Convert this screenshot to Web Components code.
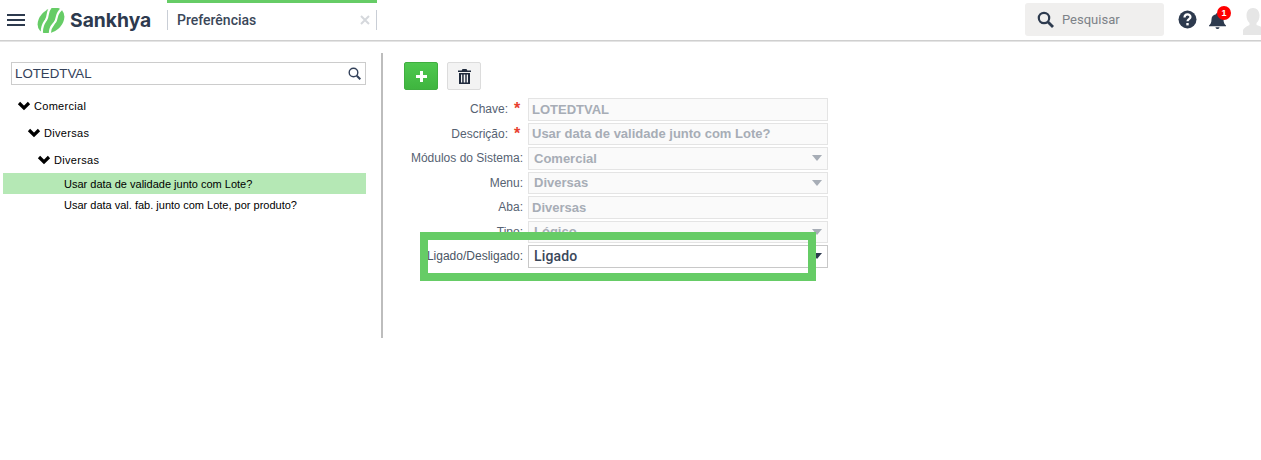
<!DOCTYPE html>
<html lang="pt-BR">
<head>
<meta charset="utf-8">
<title>Preferências</title>
<style>
  html, body { margin: 0; padding: 0; background: #fff; }
  body { font-family: "Liberation Sans", Arial, sans-serif; color: #2d3a4e; overflow: hidden; }
</style>
</head>
<body>
<sk-header></sk-header>
<sk-main>
  <sk-tree-panel slot="tree">
    <sk-tree-node level="0">Comercial</sk-tree-node>
    <sk-tree-node level="1">Diversas</sk-tree-node>
    <sk-tree-node level="2">Diversas</sk-tree-node>
    <sk-tree-leaf selected>Usar data de validade junto com Lote?</sk-tree-leaf>
    <sk-tree-leaf>Usar data val. fab. junto com Lote, por produto?</sk-tree-leaf>
  </sk-tree-panel>
  <sk-form-panel slot="form">
    <sk-field label="Chave:" required>LOTEDTVAL</sk-field>
    <sk-field label="Descrição:" required>Usar data de validade junto com Lote?</sk-field>
    <sk-field label="Módulos do Sistema:" select>Comercial</sk-field>
    <sk-field label="Menu:" select>Diversas</sk-field>
    <sk-field label="Aba:">Diversas</sk-field>
    <sk-field label="Tipo:" select>Lógico</sk-field>
    <sk-field label="Ligado/Desligado:" select active>Ligado</sk-field>
  </sk-form-panel>
</sk-main>

<script>
(function() {
    'use strict';

    // Small helper, every element below does the same thing in its constructor
    function shadow(el, html) {
        var root = el.attachShadow({ mode: 'open' });
        root.innerHTML = html;
        return root;
    }

    class SkHeader extends HTMLElement {
        constructor() {
            super();
            shadow(this, `
<style>
  :host { display: flex; align-items: stretch; height: 40px; border-bottom: 1px solid #cfcfcf; box-shadow: 0 1px 0 #e4e4e4; background: #fff; font-family: Roboto, sans-serif; box-sizing: content-box; }
  .menu { width: 18px; margin: 14px 0 0 7px; height: 12px; display: flex; flex-direction: column; justify-content: space-between; }
  .menu i { display: block; height: 2px; background: #2d3a4e; }
  .logo { display: flex; align-items: center; margin-left: 12px; width: 130px; flex: none; }
  .logo svg { display: block; flex: none; }
  .logo b { font: 700 19.300px Inter, sans-serif; color: #2d3a4e; margin-left: 5px; margin-top: -1px; }
  .tab { position: relative; width: 210px; flex: none; box-sizing: border-box; border-top: 3px solid #66cc66; padding-left: 10px; display: flex; align-items: center; justify-content: space-between; font-size: 14px; font-weight: 500; color: #3a4759; }
  .tab span { margin-top: -3px; }
  .tab::before, .tab::after { content: ""; position: absolute; top: 7px; height: 20px; width: 1px; background: #c9ced6; }
  .tab::before { left: 0; }
  .tab::after { right: 0; }
  .close { margin-right: 7px; margin-top: -3px; }
  .spacer { flex: 1; }
  .search { width: 139px; height: 33px; margin-top: 3px; background: #f0efee; border-radius: 3px; display: flex; align-items: center; box-sizing: border-box; padding-left: 12px; font-size: 13px; color: #7d8288; }
  .search span { margin-left: 8px; }
  .help { margin: 10px 0 0 14px; }
  .bell { position: relative; margin: 13px 0 0 12px; width: 18px; }
  .badge { position: absolute; top: -7px; left: 8px; width: 14px; height: 14px; border-radius: 50%; background: #f00; color: #fff; font: 700 9px/14px "Liberation Sans", sans-serif; text-align: center; }
  .user { margin: 7px 0 0 16px; width: 18px; overflow: hidden; }
</style>
<div class="menu"><i></i><i></i><i></i></div>
<div class="logo">
  <svg width="28" height="25" viewBox="0 0 28 25">
    <ellipse cx="14" cy="12.500" rx="15" ry="11" transform="rotate(-42 14 12.500)" fill="#66cc66"/>
    <g fill="none" stroke="#fff" stroke-width="2.200">
      <path d="M15 -2C9 3 12 8 9 12 7 15 4 18 5 27"/>
      <path d="M26 0C18 5 21 10 18 14 16 17 12 19 13 27"/>
    </g>
  </svg>
  <b>Sankhya</b>
</div>
<div class="tab">
  <span>Preferências</span>
  <svg class="close" width="10" height="10" viewBox="0 0 10 10"><path d="M1 1l8 8M9 1l-8 8" stroke="#d5d8dc" stroke-width="2"/></svg>
</div>
<div class="spacer"></div>
<div class="search">
  <svg width="17" height="17" viewBox="0 0 17 17" fill="none" stroke="#2d3a4e"><circle cx="7" cy="7" r="5.200" stroke-width="2.200"/><path d="M11 11l5 5" stroke-width="2.800"/></svg>
  <span>Pesquisar</span>
</div>
<svg class="help" width="19" height="19" viewBox="0 0 19 19"><circle cx="9.500" cy="9.500" r="9" fill="#2d3a4e"/><path d="M6.500 7.500c0-4 6-4 6-.500 0 2.200-3 2.200-3 4.300" fill="none" stroke="#fff" stroke-width="2.200"/><rect x="8.300" y="13" width="2.400" height="2.400" fill="#fff"/></svg>
<div class="bell">
  <svg width="17" height="16" viewBox="0 0 17 18" preserveAspectRatio="none"><path fill="#2d3a4e" d="M8.500 0c1 0 1.500.7 1.500 1.500 3 .6 4.500 3 4.500 5.500 0 4 1 5.500 2.500 7v1H0v-1c1.500-1.500 2.500-3 2.500-7 0-2.500 1.500-4.900 4.500-5.500C7 .7 7.500 0 8.500 0z"/><path fill="#2d3a4e" d="M6.500 16h4c0 1-1 2-2 2s-2-1-2-2z"/></svg>
  <div class="badge">1</div>
</div>
<div class="user">
  <svg width="22" height="28" viewBox="0 0 22 28"><path fill="#e6e6e6" d="M10 1c4 0 6.500 3 6.500 7.500 0 3-1 6-3 7.500v2c3 1.200 8 2.500 8.500 5.500v4.500H0V23.500c.5-2.500 4-4.300 6.500-5.500v-2c-2-1.500-3-4.500-3-7.500C3.500 4 6 1 10 1z"/></svg>
</div>
`);
        }
    }

    class SkMain extends HTMLElement {
        constructor() {
            super();
            shadow(this, `
<style>
  :host { display: flex; align-items: flex-start; padding-top: 12px; }
  .left { width: 381px; box-sizing: border-box; }
  .divider { width: 2px; height: 285px; background: #bdbdbd; }
  .right { flex: 1; }
</style>
<div class="left"><slot name="tree"></slot></div>
<div class="divider"></div>
<div class="right"><slot name="form"></slot></div>
`);
        }
    }

    class SkTreePanel extends HTMLElement {
        constructor() {
            super();
            shadow(this, `
<style>
  :host { display: block; padding: 9px 15px 0 3px; }
  .search { height: 23px; margin-left: 8px; border: 1px solid #ccc; box-sizing: border-box; display: flex; align-items: center; justify-content: space-between; padding: 0 4px 0 3px; font-size: 13.300px; color: #33415a; }
  .tree { padding-top: 7px; }
</style>
<div class="search">
  <span>LOTEDTVAL</span>
  <svg width="13" height="13" viewBox="0 0 13 13" fill="none" stroke="#33415a"><circle cx="5.500" cy="5.500" r="4.300" stroke-width="1.400"/><path d="M8.800 8.800l3.500 3.500" stroke-width="2"/></svg>
</div>
<div class="tree"><slot></slot></div>
`);
        }
    }

    class SkTreeNode extends HTMLElement {
        constructor() {
            super();
            var level = parseInt(this.getAttribute('level') || '0');
            shadow(this, `
<style>
  :host { display: flex; align-items: center; height: 27px; padding-left: ${14 + level * 10}px; font-size: 11px; letter-spacing: 0.3px; color: #000; }
  svg { margin-right: 3px; display: block; }
</style>
<svg width="14" height="10" viewBox="0 0 14 10"><path d="M2 2l5 5 5-5" fill="none" stroke="#000" stroke-width="3.200"/></svg>
<slot></slot>
`);
        }
    }

    class SkTreeLeaf extends HTMLElement {
        constructor() {
            super();
            shadow(this, `
<style>
  :host { display: flex; align-items: center; height: 21px; padding-left: 61px; font-size: 11px; color: #000; }
  :host([selected]) { background: #b5e8b5; }
</style>
<slot></slot>
`);
        }
    }

    class SkFormPanel extends HTMLElement {
        constructor() {
            super();
            shadow(this, `
<style>
  :host { display: block; position: relative; padding: 9px 0 0 21px; }
  .tools { display: flex; gap: 9px; height: 28px; margin-bottom: 8.100px; }
  button { width: 34px; height: 28px; padding: 0; border-radius: 2px; display: flex; align-items: center; justify-content: center; box-sizing: border-box; }
  .add { background: linear-gradient(#4fc84f, #3fb53f); border: 1px solid #3fae3f; }
  .del { background: #f3f3f3; border: 1px solid #dcdcdc; }
  .fields { display: flex; flex-direction: column; gap: 2px; }
  /* green marker drawn over the form in the screenshot */
  .mark { position: absolute; left: 37px; top: 179px; width: 396px; height: 49px; box-sizing: border-box; border: 8px solid #66cc66; pointer-events: none; }
</style>
<div class="tools">
  <button class="add" type="button"><svg width="13" height="13" viewBox="0 0 13 13"><path d="M5 1h3v4h4v3H8v4H5V8H1V5h4z" fill="#fff"/></svg></button>
  <button class="del" type="button"><svg width="13" height="15" viewBox="0 0 13 15"><path fill="#1f2a3c" d="M4.500 0h4l.8 1.500H13V3H0V1.500h3.700zM1 4h11v11H1zm2 1.500v8h1.200v-8zm2.700 0v8h1.600v-8zm3 0v8H10v-8z" fill-rule="evenodd"/></svg></button>
</div>
<div class="fields"><slot></slot></div>
<div class="mark"></div>
`);
        }
    }

    class SkField extends HTMLElement {
        constructor() {
            super();
            var required = this.hasAttribute('required');
            var select = this.hasAttribute('select');
            shadow(this, `
<style>
  :host { display: flex; height: 22.5px; font-size: 12px; }
  .label { width: 124px; flex: none; display: flex; justify-content: flex-end; align-items: center; color: #566272; white-space: nowrap; padding-right: 5px; box-sizing: border-box; }
  .star { color: #e8402f; font-size: 16px; font-weight: 700; margin-left: 6px; width: 9px; line-height: 12px; height: 12px; }
  .box { width: 300px; height: 100%; box-sizing: border-box; border: 1px solid #e4e4e4; background: #fafafa; display: flex; align-items: center; justify-content: space-between; padding: 0 ${select ? 5 : 3}px; font-size: 13px; font-weight: 700; color: #a7adb6; }
  :host([select]) .box { padding-left: 5px; }
  :host([active]) .box { background: #fff; border-color: #c8c8c8; color: #3a4759; font-weight: 500; font-family: Roboto, sans-serif; font-size: 14px; letter-spacing: 0.15px; }
  .arrow { width: 0; height: 0; border: 5px solid transparent; border-top: 6px solid #a7adb6; border-bottom: 0; }
  :host([active]) .arrow { border-top-color: #2d3a4e; }
  :host([active]) .label { color: #4a5564; }
</style>
<div class="label">${this.getAttribute('label')}${required ? '<span class="star">*</span>' : ''}</div>
<div class="box"><span><slot></slot></span>${select ? '<i class="arrow"></i>' : ''}</div>
`);
        }
    }

    customElements.define('sk-header', SkHeader);
    customElements.define('sk-main', SkMain);
    customElements.define('sk-tree-panel', SkTreePanel);
    customElements.define('sk-tree-node', SkTreeNode);
    customElements.define('sk-tree-leaf', SkTreeLeaf);
    customElements.define('sk-form-panel', SkFormPanel);
    customElements.define('sk-field', SkField);
})();
</script>
</body>
</html>
